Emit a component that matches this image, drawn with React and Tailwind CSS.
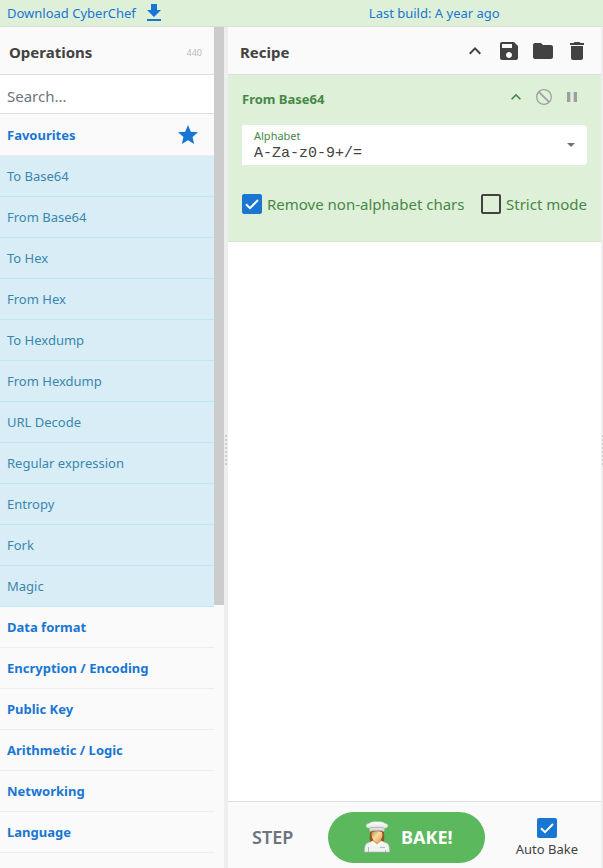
import React from "react";

const favourites = [
  "To Base64",
  "From Base64",
  "To Hex",
  "From Hex",
  "To Hexdump",
  "From Hexdump",
  "URL Decode",
  "Regular expression",
  "Entropy",
  "Fork",
  "Magic",
];

const categories = [
  "Data format",
  "Encryption / Encoding",
  "Public Key",
  "Arithmetic / Logic",
  "Networking",
  "Language",
];

function Icon({ d, className = "size-6" }) {
  return (
    <svg viewBox="0 0 24 24" fill="currentColor" aria-hidden="true" className={`block shrink-0 ${className}`}>
      <path d={d} />
    </svg>
  );
}

const icons = {
  download: "M19 9h-4V3H9v6H5l7 7 7-7zM5 18v2h14v-2H5z",
  star: "M12 17.27L18.18 21l-1.64-7.03L22 9.24l-7.19-.61L12 2 9.19 8.63 2 9.24l5.46 4.73L5.82 21z",
  up: "M7.41 15.41L12 10.83l4.59 4.58L18 14l-6-6-6 6z",
  save: "M17 3H5c-1.11 0-2 .9-2 2v14c0 1.1.89 2 2 2h14c1.1 0 2-.9 2-2V7l-4-4zm-5 16c-1.66 0-3-1.34-3-3s1.34-3 3-3 3 1.34 3 3-1.34 3-3 3zm3-10H5V5h10v4z",
  folder: "M10 4H4c-1.1 0-1.99.9-1.99 2L2 18c0 1.1.9 2 2 2h16c1.1 0 2-.9 2-2V8c0-1.1-.9-2-2-2h-8l-2-2z",
  trash: "M6 19c0 1.1.9 2 2 2h8c1.1 0 2-.9 2-2V7H6v12zM19 4h-3.5l-1-1h-5l-1 1H5v2h14V4z",
  disable:
    "M12 2.500C6.500 2.500 2.500 6.800 2.500 12s4 9.500 9.500 9.500 9.500-4.300 9.500-9.500-4-9.500-9.500-9.500zm0 17.500c-4.420 0-8-3.580-8-8 0-1.850.63-3.550 1.690-4.900L16.900 18.310C15.550 19.370 13.850 20 12 20zm6.310-3.100L7.100 5.690C8.450 4.630 10.150 4 12 4c4.420 0 8 3.580 8 8 0 1.850-.63 3.550-1.690 4.900z",
  pause: "M6 6h4v12H6zM14 6h4v12h-4z",
};

function Checkbox({ id, defaultChecked }) {
  return (
    <span className="grid size-5 shrink-0 grid-cols-1 grid-rows-1">
      <input
        id={id}
        type="checkbox"
        defaultChecked={defaultChecked}
        className="peer col-start-1 row-start-1 size-5 appearance-none rounded-xs border-2 border-[#424242] checked:border-[#1976d2] checked:bg-[#1976d2]"
      />
      <svg
        viewBox="0 0 20 20"
        aria-hidden="true"
        className="pointer-events-none invisible col-start-1 row-start-1 size-5 peer-checked:visible"
      >
        <path d="M4 10.2l4 4 8-8.2" fill="none" stroke="white" strokeWidth="2" />
      </svg>
    </span>
  );
}

function Gutter({ className }) {
  return (
    <div className={`flex shrink-0 flex-col justify-center gap-0.5 overflow-hidden bg-[#eeeeee] pt-1 pl-px ${className}`}>
      {Array.from({ length: 8 }, (_, i) => (
        <span key={i} className="size-0.5 shrink-0 bg-[#cccccc]" />
      ))}
    </div>
  );
}

function Chef() {
  return (
    <svg viewBox="0 0 32 32" aria-hidden="true" className="size-8">
      <defs>
        <linearGradient id="hat" x1="0" y1="0" x2="0" y2="1">
          <stop offset="0" stopColor="#ffffff" />
          <stop offset="1" stopColor="#d0d4d3" />
        </linearGradient>
        <linearGradient id="face" x1="0" y1="0" x2="1" y2="1">
          <stop offset="0" stopColor="#b98148" />
          <stop offset="0.45" stopColor="#fbdc9d" />
          <stop offset="1" stopColor="#d09a55" />
        </linearGradient>
      </defs>
      <path d="M9.500 8c-.8 4-1 8-.6 12 2 1.500 12.200 1.500 14.200 0 .4-4 .2-8-.6-12z" fill="#96531f" />
      <path d="M3.500 31c0-5 .6-8 3-9l5.500-2h8l5.500 2c2.400 1 3 4 3 9z" fill="#f1f3f3" stroke="#b4bbb8" strokeWidth=".6" />
      <path d="M12 20.500l1-4h6l1 4-4 3.500z" fill="#d9a964" />
      <path d="M11.500 20l4.500 3.500 4.500-3.500 1.500 1.500-4 3-2-1-2 1-4-3z" fill="#ffffff" />
      <path d="M10.800 11c1-2 9.400-2 10.400 0 .8 5-.5 8.300-5.200 10.500-4.700-2.200-6-5.500-5.200-10.500z" fill="url(#face)" />
      <path d="M9.800 12c1.500-2.500 10.900-2.500 12.400 0l-.2-4H10z" fill="#8a4b22" />
      <path
        d="M9 10.500L8.500 7C4 7 4 3 8 2.400 10 .8 13.500.7 16 .8c2.500-.1 6 0 8 1.600 4 .6 4 4.600-.5 4.600L23 10.500c-3-1.300-11-1.300-14 0z"
        fill="url(#hat)"
        stroke="#c5cac7"
        strokeWidth=".5"
      />
      <path d="M8.700 7c4-1 10.600-1 14.600 0" fill="none" stroke="#a9aeab" strokeWidth=".8" />
      <path d="M7.500 26v5M24.500 29v2M19 26.500h5" fill="none" stroke="#b4bbb8" strokeWidth="1" />
    </svg>
  );
}

export default function App() {
  return (
    <div className="flex h-screen flex-col overflow-hidden bg-white font-['Noto_Sans','Open_Sans',sans-serif] text-[13px] text-[#424242]">
      <header className="grid h-[27px] shrink-0 grid-cols-[61%_1fr] border-b border-[#dddddd] bg-[#dff0d8] leading-6 text-[#1976d2]">
        <a href="#download" className="flex gap-1.5 pt-px pl-[7px]">
          <span>Download CyberChef</span>
          <Icon d={icons.download} />
        </a>
        <a href="#changelog" className="pt-px pl-px whitespace-nowrap">
          Last build: A year ago
        </a>
      </header>

      <div className="flex min-h-0 flex-1">
        <aside className="flex w-56 shrink-0 bg-[#fafafa]">
          <div className="min-w-0 flex-1 overflow-hidden">
            <div className="flex h-12 items-center justify-between border-b border-[#dddddd] pt-1 pr-3 pl-[9px]">
              <h2 className="text-[15px] font-bold">Operations</h2>
              <span className="text-[9px] text-[#bbbbbb]">440</span>
            </div>
            <input
              type="search"
              aria-label="Search operations"
              placeholder="Search..."
              className="block h-[39px] w-full border-b border-[#dddddd] bg-white px-[7px] pt-1 text-[15px] outline-none placeholder:text-[#6c757d]"
            />
            <button
              type="button"
              className="flex h-[42px] w-full items-center justify-between border-b border-[#eeeeee] pr-3.5 pl-[7px] font-bold text-[#1976d2]"
            >
              <span className="pt-0.5">Favourites</span>
              <Icon d={icons.star} />
            </button>
            <ul>
              {favourites.map((name) => (
                <li
                  key={name}
                  className="flex h-[41px] items-center border-b border-[#bce8f1] bg-[#d9edf7] px-[7px] pt-0.5 text-[#3a87ad]"
                >
                  {name}
                </li>
              ))}
            </ul>
            {categories.map((name) => (
              <button
                key={name}
                type="button"
                className="flex h-[41px] w-full items-center border-b border-[#eeeeee] px-[7px] pt-0.5 font-bold text-[#1976d2]"
              >
                {name}
              </button>
            ))}
          </div>
          <div className="w-2.5 shrink-0">
            <div className="h-[578px] bg-[#cccccc]" />
          </div>
        </aside>

        <Gutter className="w-1" />

        <main className="flex min-w-0 flex-1 flex-col">
          <div className="flex h-12 shrink-0 items-center justify-between border-b border-[#dddddd] bg-[#fafafa] px-3">
            <h2 className="pt-1 text-[15px] font-bold">Recipe</h2>
            <div className="flex gap-2.5">
              <button type="button" aria-label="Collapse all"><Icon d={icons.up} /></button>
              <button type="button" aria-label="Save recipe"><Icon d={icons.save} /></button>
              <button type="button" aria-label="Load recipe"><Icon d={icons.folder} /></button>
              <button type="button" aria-label="Clear recipe"><Icon d={icons.trash} /></button>
            </div>
          </div>

          <section className="h-[167px] shrink-0 border-b border-[#d6e9c6] bg-[#dff0d8] px-3.5 text-[#468847]">
            <div className="flex h-[50px] items-center justify-between pr-[5px] pb-1">
              <h3 className="pt-1 font-bold">From Base64</h3>
              <div className="flex gap-2 pb-0.5 text-[#9e9e9e]">
                <button type="button" aria-label="Collapse" className="text-[#468847]"><Icon d={icons.up} className="size-5" /></button>
                <button type="button" aria-label="Disable"><Icon d={icons.disable} className="size-5" /></button>
                <button type="button" aria-label="Breakpoint"><Icon d={icons.pause} className="size-5" /></button>
              </div>
            </div>
            <div className="flex h-10 items-center justify-between rounded-r bg-white px-3">
              <div className="min-w-0 flex-1 pt-0.5">
                <label htmlFor="alphabet" className="block text-[11px] leading-4">Alphabet</label>
                <input
                  id="alphabet"
                  defaultValue="A-Za-z0-9+/="
                  className="block h-5 w-full bg-transparent font-['Liberation_Mono',monospace] text-[15px] text-[#424242] outline-none"
                />
              </div>
              <svg viewBox="0 0 8 4" aria-hidden="true" className="h-1 w-2 fill-[#6c757d]"><path d="M0 0h8L4 4z" /></svg>
            </div>
            <div className="flex items-center justify-between pt-7 text-[15px]">
              <div className="flex items-center gap-[5px]">
                <Checkbox id="remove" defaultChecked />
                <label htmlFor="remove" className="whitespace-nowrap">Remove non-alphabet chars</label>
              </div>
              <div className="flex items-center gap-[5px]">
                <Checkbox id="strict" />
                <label htmlFor="strict" className="whitespace-nowrap">Strict mode</label>
              </div>
            </div>
          </section>

          <div className="flex-1 bg-white" />

          <footer className="flex h-[67px] shrink-0 items-center justify-between border-t border-[#dddddd] bg-[#fafafa] pt-1 pr-[23px] pl-6">
            <button type="button" className="w-[46px] text-left text-lg font-semibold text-[#6c757d]">STEP</button>
            <button
              type="button"
              className="flex h-[51px] w-[157px] items-center justify-center gap-2 rounded-full bg-[#5cb85c] text-lg font-bold text-white"
            >
              <Chef />
              BAKE!
            </button>
            <div className="flex flex-col items-center gap-0.5 pt-1">
              <Checkbox id="auto" defaultChecked />
              <label htmlFor="auto" className="whitespace-nowrap">Auto Bake</label>
            </div>
          </footer>
        </main>

        <Gutter className="w-0.5" />
      </div>
    </div>
  );
}
